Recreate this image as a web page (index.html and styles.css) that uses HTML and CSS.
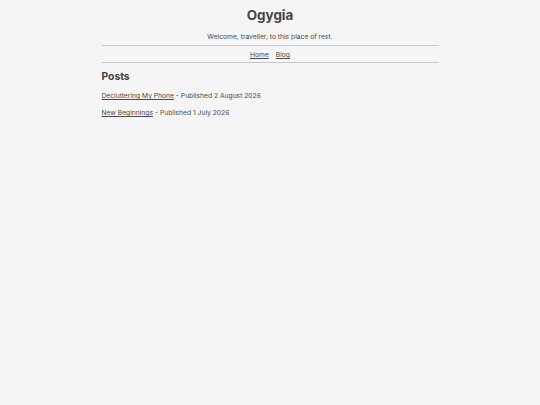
FILE: index.html
```html
<!DOCTYPE html>
<html>
<head>
<meta charset="utf-8">
<link rel="stylesheet" href="styles.css">
</head>
<body>
<div class="page">
  <header class="header">
    <h1 class="title">Ogygia</h1>
    <p class="tagline">Welcome, traveller, to this place of rest.</p>
  </header>
  <nav class="nav">
    <a href="#">Home</a>
    <a href="#">Blog</a>
  </nav>
  <main class="main">
    <h2 class="section-title">Posts</h2>
    <p class="post"><a href="#">Decluttering My Phone</a> - Published 2 August 2026</p>
    <p class="post"><a href="#">New Beginnings</a> - Published 1 July 2026</p>
  </main>
</div>
</body>
</html>
```
FILE: styles.css
```css
html, body {
  margin: 0;
  padding: 0;
  background: #f5f5f5;
}
body {
  font-family: Inter, "Noto Sans", sans-serif;
  color: #4a4a4a;
  font-size: 6.72px;
}
.page {
  width: 337px;
  margin: 0 auto;
}
.header {
  text-align: center;
  padding-top: 6px;
}
.title {
  margin: 0;
  font-size: 13.44px;
  line-height: 18px;
  font-weight: 700;
  color: #444;
}
.tagline {
  margin: 8px 0 0;
  line-height: 10px;
  padding-bottom: 3px;
}
.nav {
  border-top: 1px solid #c8c8c8;
  border-bottom: 1px solid #c8c8c8;
  text-align: center;
  padding: 4px 0 3px;
  line-height: 9px;
  display: flex;
  justify-content: center;
  gap: 7px;
}
a {
  color: #4a4a4a;
  text-decoration: underline;
}
.section-title {
  margin: 6px 0 0;
  font-size: 10.3px;
  line-height: 14px;
  font-weight: 700;
  color: #444;
}
.post {
  margin: 7px 0 0;
  line-height: 11px;
}
.post + .post {
  margin-top: 6px;
}
```
